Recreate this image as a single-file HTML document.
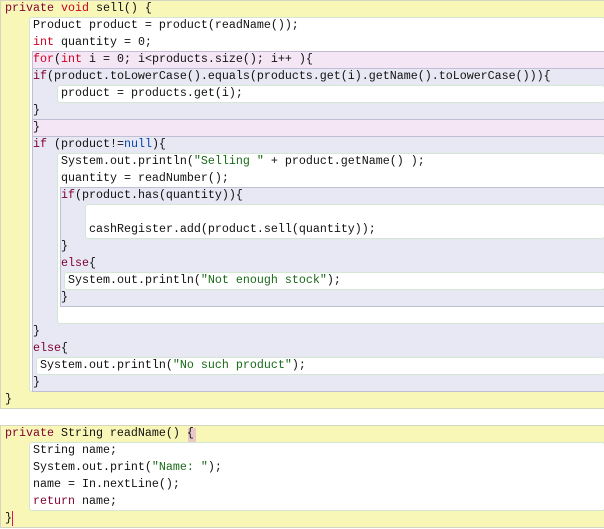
<!DOCTYPE html>
<html><head><style>
html,body{margin:0;padding:0;width:604px;height:529px;overflow:hidden;background:#fff}
.b{position:absolute;box-sizing:border-box}
.y{background:#f9f7b8;border:1px solid #d6d6c0}
.w{background:#fff;border:1px solid #d4e6d4;border-radius:3px}
.p{background:#f4e6f4;border:1px solid #c4bcd4}
.l{background:#e8e8f4;border:1px solid #c0c0d4}
.t{position:absolute;font-family:"Liberation Mono",monospace;font-size:11.67px;line-height:17px;height:17px;white-space:pre;color:#111}
.k{color:#7f0030}.r{color:#cc0022}.s{color:#1a6a1a}.n{color:#0044aa}
</style></head><body>
<!-- method 1 -->
<div class="b y" style="left:0;top:0;width:605px;height:409px"></div>
<div class="b w" style="left:29;top:17px;left:29px;width:576px;height:375px"></div>
<div class="b p" style="left:32px;top:51px;width:573px;height:86px"></div>
<div class="b l" style="left:32px;top:68px;width:573px;height:52px"></div>
<div class="b w" style="left:57px;top:85px;width:548px;height:18px"></div>
<div class="b l" style="left:32px;top:136px;width:573px;height:256px"></div>
<div class="b w" style="left:57px;top:153px;width:548px;height:171px"></div>
<div class="b l" style="left:60px;top:187px;width:545px;height:120px"></div>
<div class="b w" style="left:85px;top:204px;width:520px;height:35px"></div>
<div class="b w" style="left:64px;top:272px;width:541px;height:18px"></div>
<div class="b w" style="left:36px;top:357px;width:569px;height:18px"></div>
<!-- method 2 -->
<div class="b y" style="left:0;top:425px;width:605px;height:103px"></div>
<div class="b w" style="left:29px;top:442px;width:576px;height:69px"></div>
<div class="b" style="left:12px;top:511px;width:1px;height:15px;background:#e0105a"></div>
<div class="b" style="left:188px;top:428px;width:8px;height:14px;background:#e8c8c8"></div>

<div class="t" style="left:5px;top:0"><span class="k">private</span> <span class="r">void</span> sell() {</div>
<div class="t" style="left:33px;top:17px">Product product = product(readName());</div>
<div class="t" style="left:33px;top:34px"><span class="r">int</span> quantity = 0;</div>
<div class="t" style="left:33px;top:51px"><span class="r">for</span>(<span class="r">int</span> i = 0; i&lt;products.size(); i++ ){</div>
<div class="t" style="left:33px;top:68px"><span class="k">if</span>(product.toLowerCase().equals(products.get(i).getName().toLowerCase())){</div>
<div class="t" style="left:61px;top:85px">product = products.get(i);</div>
<div class="t" style="left:33px;top:102px">}</div>
<div class="t" style="left:33px;top:119px">}</div>
<div class="t" style="left:33px;top:136px"><span class="k">if</span> (product!=<span class="n">null</span>){</div>
<div class="t" style="left:61px;top:153px">System.out.println(<span class="s">"Selling "</span> + product.getName() );</div>
<div class="t" style="left:61px;top:170px">quantity = readNumber();</div>
<div class="t" style="left:61px;top:187px"><span class="k">if</span>(product.has(quantity)){</div>
<div class="t" style="left:89px;top:221px">cashRegister.add(product.sell(quantity));</div>
<div class="t" style="left:61px;top:238px">}</div>
<div class="t" style="left:61px;top:255px"><span class="k">else</span>{</div>
<div class="t" style="left:68px;top:272px">System.out.println(<span class="s">"Not enough stock"</span>);</div>
<div class="t" style="left:61px;top:289px">}</div>
<div class="t" style="left:33px;top:323px">}</div>
<div class="t" style="left:33px;top:340px"><span class="k">else</span>{</div>
<div class="t" style="left:40px;top:357px">System.out.println(<span class="s">"No such product"</span>);</div>
<div class="t" style="left:33px;top:374px">}</div>
<div class="t" style="left:5px;top:391px">}</div>

<div class="t" style="left:5px;top:425px"><span class="k">private</span> String readName() {</div>
<div class="t" style="left:33px;top:442px">String name;</div>
<div class="t" style="left:33px;top:459px">System.out.print(<span class="s">"Name: "</span>);</div>
<div class="t" style="left:33px;top:476px">name = In.nextLine();</div>
<div class="t" style="left:33px;top:493px"><span class="k">return</span> name;</div>
<div class="t" style="left:5px;top:510px">}</div>
</body></html>
